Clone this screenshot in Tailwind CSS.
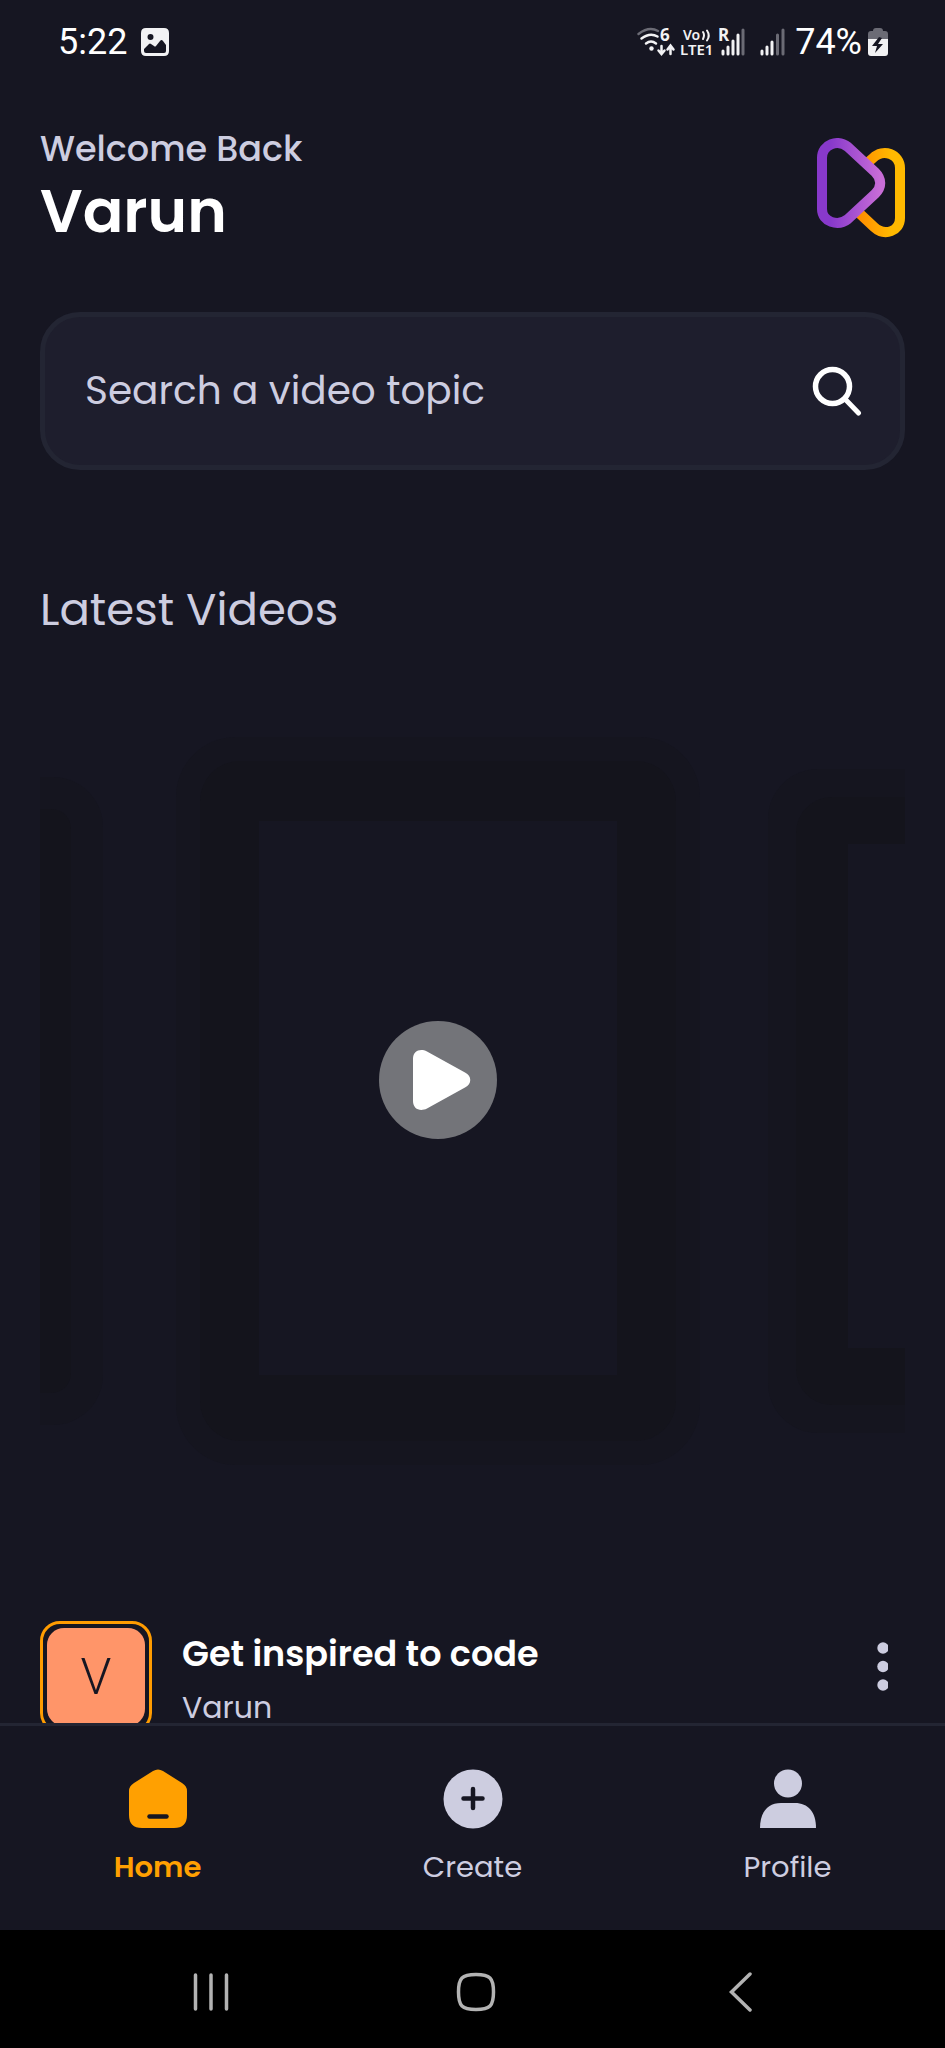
<!DOCTYPE html>
<html lang="en">
<head>
<meta charset="utf-8">
<meta name="viewport" content="width=device-width, initial-scale=1">
<title>Home</title>
<script src="https://cdn.jsdelivr.net/npm/@tailwindcss/browser@4"></script>
</head>
<body class="flex h-screen flex-col overflow-hidden bg-[#161622] font-['Poppins',Inter,sans-serif] text-[#cdcde0]">

<!-- Status bar -->
<div class="flex h-[84px] shrink-0 items-center justify-between pr-[57px] pl-[58px] font-['Roboto',sans-serif] text-white">
  <div class="flex items-center gap-3.5">
    <span class="text-[36px] leading-10">5:22</span>
    <svg class="h-7 w-7" viewBox="0 0 28 28" aria-hidden="true"><path fill="#f2f2f4" fill-rule="evenodd" d="M5 0h18q5 0 5 5v18q0 5-5 5H5q-5 0-5-5V5q0-5 5-5Zm4.500 6a3 3 0 1 0 0 6 3 3 0 0 0 0-6ZM3 21v2q0 2 2 2h18q2 0 2-2v-6l-3-4q-1.500-2-3 0l-4 5q-1 1-2 0l-3-2q-1-1-2 0Z"/></svg>
  </div>
  <div class="flex items-center gap-1">
    <svg class="h-7 w-[108px] overflow-visible" viewBox="0 0 108 28" fill="none" aria-hidden="true">
      <g stroke-linecap="round" stroke-width="2.500">
        <path stroke="#6b6b75" d="M1.500 6Q12-2 21 3"/>
        <path stroke="#f2f2f4" d="M4.500 10.500Q13 4 20.500 8.500M9 15.500q5-4 10 0"/>
        <path stroke="#f2f2f4" d="M24.500 18v7.500m-3-3 3 3.500 3-3.500M33.500 26v-8m-3 3.500 3-4 3 4"/>
        <path stroke="#f2f2f4" stroke-width="2" d="M66 4q2 3 0 7M70 2.500q3.500 5 0 10"/>
      </g>
      <circle cx="14.500" cy="20.500" r="2.200" fill="#f2f2f4"/>
      <g fill="#f2f2f4" font-family="Noto Sans" font-weight="700">
        <text x="23" y="13" font-size="17">6</text>
        <text x="46" y="12" font-size="14" font-weight="600">Vo</text>
        <text x="43" y="27" font-size="15" font-weight="600">LTE1</text>
        <text x="81" y="13" font-size="17">R</text>
      </g>
      <g stroke="#f2f2f4" stroke-width="3" stroke-linecap="round">
        <path d="M86 23v3M91 19v7M96 13v13M101 7v19"/><path stroke="#6b6b75" d="M106 2v24"/>
      </g>
    </svg>
    <svg class="ml-2.5 h-7 w-[26px]" viewBox="0 0 26 28" stroke="#f2f2f4" stroke-width="3" stroke-linecap="round" aria-hidden="true"><path d="M3 23v3M8 19v7M13 14v12"/><path stroke="#6b6b75" d="M18.500 7v19M24 2v24"/></svg>
    <span class="ml-1.5 text-[36px] leading-10">74%</span>
    <svg class="ml-0.5 h-7 w-5" viewBox="0 0 20 28" aria-hidden="true"><path fill="#6b6b75" d="M5 3q0-3 3-3h4q3 0 3 3h2q3 0 3 3v6H0V6q0-3 3-3Z"/><path fill="#f2f2f4" d="M0 11h20v14q0 3-3 3H3q-3 0-3-3Z"/><path fill="#161622" d="M11 9 4 18h5l-2 7 8-9h-5l4-6Z"/></svg>
  </div>
</div>

<main class="flex min-h-0 flex-1 flex-col overflow-hidden px-10">
  <header class="flex shrink-0 items-start justify-between pt-[42px]">
    <div>
      <p class="text-[35px] leading-[46px] font-medium">Welcome Back</p>
      <h1 class="text-[60px] leading-[78px] font-semibold text-white">Varun</h1>
    </div>
    <svg class="mt-3 h-[100px] w-[88px]" viewBox="0 0 88 100" fill="none" stroke-width="10" aria-label="Logo">
      <defs>
        <linearGradient id="purple" x1="0" x2="1" y1="0" y2="0"><stop offset=".15" stop-color="#8839cb"/><stop offset="1" stop-color="#c86dd7"/></linearGradient>
        <linearGradient id="amber" x1="0" x2="1" y1="0" y2="0"><stop offset="0" stop-color="#ff8c00"/><stop offset=".8" stop-color="#ffb900"/></linearGradient>
      </defs>
      <path stroke="url(#amber)" d="M41 74 57 89C68 99 83 93 83 80V30C83 16 66 10 56 20L49 26"/>
      <path stroke="url(#purple)" d="M5 20C5 6 21 1 31 9L58 34C65 41 65 49 58 56L31 81C21 89 5 84 5 71Z"/>
    </svg>
  </header>

  <form class="mt-[62px] flex h-[158px] shrink-0 items-center rounded-[40px] border-5 border-[#232533] bg-[#1e1e2d] pr-[38px] pl-10" onsubmit="return false">
    <input type="text" aria-label="Search a video topic" placeholder="Search a video topic" class="min-w-0 flex-1 bg-transparent text-[39px] leading-[56px] text-white outline-none placeholder:text-[#cdcde0]">
    <button type="submit" aria-label="Search" class="shrink-0">
      <svg class="h-[50px] w-[50px]" viewBox="0 0 50 50" fill="none" stroke="#fff" stroke-linecap="round" aria-hidden="true"><circle cx="20.500" cy="20.500" r="17" stroke-width="5.500"/><path stroke-width="5" d="m33 33 13.500 14"/></svg>
    </button>
  </form>

  <h2 class="mt-[110px] shrink-0 text-[45px] leading-[60px]">Latest Videos</h2>

  <!-- Video carousel -->
  <div class="mt-[97px] flex h-[728px] shrink-0 items-center overflow-hidden">
    <div class="-ml-[409px] h-[648px] w-[472px] shrink-0 rounded-[50px] bg-[#15151f] p-8"><div class="h-full rounded-[20px] bg-[#14141c]"></div></div>
    <div class="ml-[73px] h-[728px] w-[524px] shrink-0 rounded-[60px] bg-[#15151f] p-6">
      <div class="h-full rounded-[40px] bg-[#14141c] px-[59px] pt-[60px] pb-[66px]">
        <div class="flex h-full items-center justify-center bg-[#161622] pb-9">
          <button type="button" aria-label="Play video" class="flex h-[118px] w-[118px] items-center justify-center rounded-full bg-[#737479]">
            <svg class="ml-2 h-[60px] w-[58px]" viewBox="0 0 58 60" fill="#fff" aria-hidden="true"><path d="M0 9C0 1 7-2 14 1.500L52 22.500C59 26 59 34 52 37.500L14 58.500C7 62 0 59 0 51Z"/></svg>
          </button>
        </div>
      </div>
    </div>
    <div class="ml-[68px] h-[664px] w-[472px] shrink-0 rounded-[50px] bg-[#15151f] p-7">
      <div class="h-full rounded-[36px] bg-[#14141c] px-[52px] pt-[47px] pb-[57px]"><div class="h-full bg-[#161622]"></div></div>
    </div>
  </div>

  <!-- Video card header -->
  <article class="mt-[156px] flex shrink-0 items-start">
    <div class="h-28 w-28 shrink-0 rounded-[20px] border-[3px] border-[#ff9c01] p-1"><div class="flex h-full items-center justify-center rounded-[17px] bg-[#ff9569] font-['Roboto',sans-serif] text-[50px] font-light text-[#161622]">V</div></div>
    <div class="ml-[30px] min-w-0 flex-1 pt-[5px]">
      <h3 class="text-[35px] leading-[56px] font-semibold text-white">Get inspired to code</h3>
      <p class="text-[30px] leading-[52px]">Varun</p>
    </div>
    <button type="button" aria-label="More options" class="mt-[21px] mr-[17px]"><svg class="h-[50px] w-[11px]" viewBox="0 0 11 50" fill="#cdcde0" aria-hidden="true"><circle cx="6" cy="6" r="5.700"/><circle cx="6" cy="24.500" r="5.700"/><circle cx="6" cy="43" r="5.700"/></svg></button>
  </article>
</main>

<nav class="grid h-[207px] shrink-0 grid-cols-3 border-t-[3px] border-[#232533] bg-[#161622] text-[29px] leading-10">
  <a href="#home" aria-current="page" class="flex flex-col items-center gap-[18px] pt-[43px] font-semibold text-[#ffa001]">
    <svg class="h-[60px] w-[60px]" viewBox="0 0 60 60" aria-hidden="true"><path fill="#ffa001" d="M25 2q5-3 10 0l19 12q5 3 5 8v24q0 13-13 13H14Q1 59 1 46V22q0-5 5-8Z"/><path stroke="#161622" stroke-width="4.500" stroke-linecap="round" d="M21.500 47.500h17"/></svg>
    Home
  </a>
  <a href="#create" class="flex flex-col items-center gap-[18px] pt-[43px]">
    <svg class="h-[60px] w-[60px]" viewBox="0 0 60 60" aria-hidden="true"><circle cx="30" cy="30" r="29.500" fill="#cdcde0"/><path stroke="#161622" stroke-width="4.500" stroke-linecap="round" d="M20.500 29.500h19M30 20v19"/></svg>
    Create
  </a>
  <a href="#profile" class="flex flex-col items-center gap-[18px] pt-[43px]">
    <svg class="h-[60px] w-[60px]" viewBox="0 0 60 60" fill="#cdcde0" aria-hidden="true"><circle cx="30" cy="14.500" r="14"/><path d="M2 59C2 43 10 34 23 34H37C50 34 58 43 58 59Z"/></svg>
    Profile
  </a>
</nav>

<!-- System navigation -->
<div class="flex h-[118px] shrink-0 items-center justify-center gap-[225px] bg-black pt-1.5 pl-[7px]">
  <button type="button" aria-label="Recent apps"><svg class="h-10 w-10" viewBox="0 0 40 40" stroke="#b3b3b3" stroke-width="3.500" stroke-linecap="round" aria-hidden="true"><path d="M4.500 3v34M20 3v34M35.500 3v34"/></svg></button>
  <button type="button" aria-label="System home"><svg class="h-10 w-10" viewBox="0 0 40 40" fill="none" stroke="#b3b3b3" stroke-width="3.500" aria-hidden="true"><path d="M20 2.500C34 2.500 37.500 6 37.500 20S34 37.500 20 37.500 2.500 34 2.500 20 6 2.500 20 2.500Z"/></svg></button>
  <button type="button" aria-label="Back"><svg class="h-10 w-10" viewBox="0 0 40 40" fill="none" stroke="#b3b3b3" stroke-width="3.500" stroke-linecap="round" aria-hidden="true"><path d="M29 2 10.500 20 29 38"/></svg></button>
</div>
</body>
</html>
